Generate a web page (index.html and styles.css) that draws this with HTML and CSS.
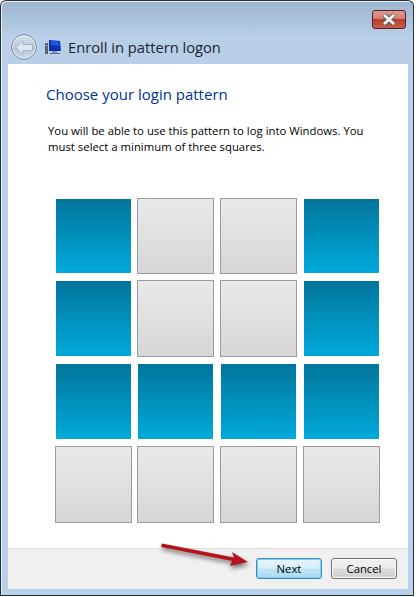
FILE: index.html
```html
<!DOCTYPE html>
<html>
    <head>
        <title>Enroll in pattern logon</title>
        <link rel="stylesheet" href="styles.css">
    </head>
    <body>
        <div class="window">
            <div class="titlebar">
                <div class="close">
                    <svg width="16" height="13" viewBox="0 0 16 13">
                        <path d="M3 2 L13 11 M13 2 L3 11" stroke="#5a5a5a" stroke-width="5" fill="none"/>
                        <path d="M3 2 L13 11 M13 2 L3 11" stroke="#f4f4f4" stroke-width="3" fill="none"/>
                    </svg>
                </div>
                <div class="nav">
                    <div class="back">
                        <svg width="20" height="17" viewBox="0 0 20 17">
                            <path d="M9 1.5 L2 8.5 L9 15.5 L9 11.5 L18.5 11.5 L18.5 5.5 L9 5.5 Z" fill="#dfe7f0" stroke="#a3b4c8" stroke-width="1"/>
                        </svg>
                    </div>
                    <svg class="app-icon" width="17" height="15" viewBox="0 0 17 15">
                        <rect x="0" y="3" width="3" height="11" fill="#5a6470"/>
                        <rect x="1" y="5" width="1" height="1" fill="#d8dee6"/>
                        <path d="M4 0 L15 1 L16 11 L4 11 Z" fill="#0a2fb0"/>
                        <path d="M6 1 L14 1.5 L14.5 6 L6 5 Z" fill="#1f57e8"/>
                        <rect x="7" y="11" width="5" height="2" fill="#8a96a6"/>
                        <rect x="5" y="13" width="10" height="1" fill="#5f6b7a"/>
                    </svg>
                    <span class="title">Enroll in pattern logon</span>
                </div>
            </div>
            <div class="client">
                <div class="content">
                    <h1>Choose your login pattern</h1>
                    <p>You will be able to use this pattern to log into Windows. You must select a minimum of three squares.</p>
                    <div class="pattern">
                        <div class="cell on"></div>
                        <div class="cell"></div>
                        <div class="cell"></div>
                        <div class="cell on"></div>
                        <div class="cell on"></div>
                        <div class="cell"></div>
                        <div class="cell"></div>
                        <div class="cell on"></div>
                        <div class="cell on"></div>
                        <div class="cell on"></div>
                        <div class="cell on"></div>
                        <div class="cell on"></div>
                        <div class="cell"></div>
                        <div class="cell"></div>
                        <div class="cell"></div>
                        <div class="cell"></div>
                    </div>
                </div>
                <div class="footer">
                    <button class="btn btn-default">Next</button>
                    <button class="btn">Cancel</button>
                </div>
            </div>
        </div>
        <!-- annotation drawn over the screenshot -->
        <svg class="arrow" width="100" height="30" viewBox="0 0 100 30">
            <path d="M2 2.5 L74 16.5 L72 11 L88 21 L70 25 L72 20 L1 6 Z" fill="#b5121b"/>
        </svg>
    </body>
</html>
```

FILE: styles.css
```css
html, body{
    margin:0;
    padding:0;
    background-color:white;
}
body{
    width:416px;
    height:597px;
    overflow:hidden;
    position:relative;
    font-family:"Open Sans", sans-serif;
}
.window{
    box-sizing:border-box;
    width:414px;
    height:596px;
    border:1px solid #2b3136;
    border-bottom-color:#1d2b33;
    border-radius:6px 6px 0 0;
    padding:0 5px 6px 7px;
    background:linear-gradient(#9cb5d1, #b9cfe8 36px, #b9d1ea);
    box-shadow:inset 1px 1px 0 #e6edf5;
    display:flex;
    flex-direction:column;
}
.titlebar{
    height:63px;
    flex-shrink:0;
    display:flex;
    flex-direction:column;
}
.close{
    box-sizing:border-box;
    align-self:flex-end;
    width:34px;
    height:19px;
    margin-top:9px;
    margin-right:2px;
    border:1px solid #5e1a2c;
    border-radius:3px;
    background:linear-gradient(#dc9c8e, #cf7f70 46%, #b8402a 50%, #c4604c);
    display:flex;
    align-items:center;
    justify-content:center;
}
.nav{
    display:flex;
    align-items:center;
    margin-top:5px;
    margin-left:3px;
}
.back{
    box-sizing:border-box;
    width:26px;
    height:26px;
    border-radius:50%;
    border:1px solid #75859a;
    background:linear-gradient(#dbe4ee, #b3c4d8 55%, #cddaea);
    box-shadow:0 0 2px #eef3f9, inset 0 0 0 1px #e8eef5;
    display:flex;
    align-items:center;
    justify-content:center;
}
.app-icon{
    margin-left:8px;
}
.title{
    margin-left:6px;
    font-size:14.7px;
    color:#1c2430;
}
.client{
    flex:1;
    display:flex;
    flex-direction:column;
    background-color:white;
}
.content{
    flex:1;
    padding-left:38px;
}
h1{
    margin:20px 0 0 0;
    font-size:15px;
    font-weight:normal;
    line-height:20px;
    color:#003399;
}
p{
    margin:19px 0 0 2px;
    width:335px;
    font-size:11.35px;
    line-height:16px;
    color:black;
}
.pattern{
    display:grid;
    grid-template-columns:repeat(4, 77px);
    grid-template-rows:76px 77px 77px 77px;
    column-gap:5.67px;
    row-gap:6px;
    margin-top:43px;
    margin-left:8.8px;
}
.cell{
    box-sizing:border-box;
    border:1px solid #9b9b9b;
    background:linear-gradient(#e9e9e9, #d6d6d6);
}
.cell.on{
    border:none;
    margin:1px;
    background:linear-gradient(#02759b, #00aadb);
}
.footer{
    box-sizing:border-box;
    height:41px;
    border-top:1px solid #dfdfdf;
    background-color:#f0f0f0;
    padding:9px 11px 0 0;
    display:flex;
    justify-content:flex-end;
    gap:9px;
}
.btn{
    box-sizing:border-box;
    width:66px;
    height:21px;
    padding:0;
    border:1px solid #707070;
    border-radius:3px;
    background:linear-gradient(#f2f2f2, #ebebeb 48%, #dcdcdc 52%, #cfcfcf);
    box-shadow:inset 0 0 0 1px #fbfbfb;
    font-family:"Open Sans", sans-serif;
    font-size:11.3px;
    color:black;
}
.btn-default{
    border-color:#3c8db5;
    background:linear-gradient(#e8f5fc, #d9eefa 48%, #bde4f7 52%, #a8d9f2);
    box-shadow:inset 0 0 0 1px #7fd0ee;
}
.arrow{
    position:absolute;
    left:160px;
    top:541px;
    filter:drop-shadow(1px 3px 2px rgba(0,0,0,0.5));
}
```
